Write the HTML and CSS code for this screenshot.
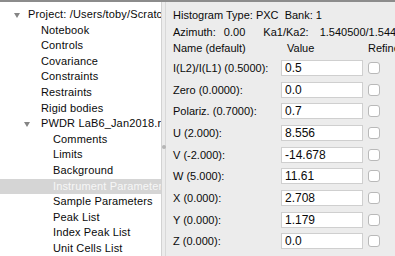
FILE: index.html
```html
<!DOCTYPE html>
<html lang="en">
<head>
  <meta charset="UTF-8">
  <title>GSAS-II Data Tree</title>
  <link rel="stylesheet" href="styles.css">
</head>
<body>
  <div class="topbar"></div>
  <div class="window">
    <div class="tree">
      <div class="node open">Project: /Users/toby/Scratch/LaB6.gpx</div>
      <div class="node lvl1">Notebook</div>
      <div class="node lvl1">Controls</div>
      <div class="node lvl1">Covariance</div>
      <div class="node lvl1">Constraints</div>
      <div class="node lvl1">Restraints</div>
      <div class="node lvl1">Rigid bodies</div>
      <div class="node open sub">PWDR LaB6_Jan2018.raw Bank 1</div>
      <div class="node lvl2">Comments</div>
      <div class="node lvl2">Limits</div>
      <div class="node lvl2">Background</div>
      <div class="node lvl2 selected">Instrument Parameters</div>
      <div class="node lvl2">Sample Parameters</div>
      <div class="node lvl2">Peak List</div>
      <div class="node lvl2">Index Peak List</div>
      <div class="node lvl2">Unit Cells List</div>
    </div>
    <div class="sash"><span class="grip"></span></div>
    <div class="panel">
      <div class="info">Histogram Type: PXC <span class="sep">Bank: 1</span></div>
      <div class="info">Azimuth: <span class="num">0.00</span> <span class="wide">Ka1/Ka2:</span> <span class="wave">1.540500/1.544390</span></div>
      <div class="params">
        <div class="head">Name (default)</div>
        <div class="head">Value</div>
        <div class="head">Refine?</div>

        <label>I(L2)/I(L1) (0.5000):</label>
        <input type="text" value="0.5">
        <span class="check"></span>

        <label>Zero (0.0000):</label>
        <input type="text" value="0.0">
        <span class="check"></span>

        <label>Polariz. (0.7000):</label>
        <input type="text" value="0.7">
        <span class="check"></span>

        <label>U (2.000):</label>
        <input type="text" value="8.556">
        <span class="check"></span>

        <label>V (-2.000):</label>
        <input type="text" value="-14.678">
        <span class="check"></span>

        <label>W (5.000):</label>
        <input type="text" value="11.61">
        <span class="check"></span>

        <label>X (0.000):</label>
        <input type="text" value="2.708">
        <span class="check"></span>

        <label>Y (0.000):</label>
        <input type="text" value="1.179">
        <span class="check"></span>

        <label>Z (0.000):</label>
        <input type="text" value="0.0">
        <span class="check"></span>
      </div>
    </div>
  </div>
</body>
</html>
```

FILE: styles.css
```css
body {
  margin: 0;
  font-family: "Liberation Sans", Arial, sans-serif;
  font-size: 11px;
  color: #0a0a0a;
  background-color: #ececec;
  overflow: hidden;
}
.topbar {
  height: 2px;
  background-color: #8c8c8c;
}
.window {
  display: flex;
  height: 254px;
}
.tree {
  width: 161px;
  flex: none;
  background: #fff;
  padding-top: 5px;
  overflow: hidden;
  white-space: nowrap;
  letter-spacing: 0.15px;
}
.node {
  position: relative;
  height: 15.6px;
  line-height: 15.6px;
  padding-left: 28px;
}
.node.lvl1 {
  padding-left: 41px;
}
.node.lvl2 {
  padding-left: 53px;
}
.node.sub {
  padding-left: 41px;
}
.node.open::before {
  content: "";
  position: absolute;
  left: 14px;
  top: 6px;
  border-left: 3.5px solid transparent;
  border-right: 3.5px solid transparent;
  border-top: 5px solid #858585;
}
.node.sub::before {
  left: 24px;
}
.node.selected {
  background-color: #d5d5d5;
  color: #f7f7f7;
}
.sash {
  width: 3px;
  flex: none;
  border-left: 1px solid #d2d2d2;
  border-right: 1px solid #d8d8d8;
  background-color: #ececec;
}
.grip {
  display: block;
  width: 4px;
  height: 4px;
  margin-top: 143px;
  border-radius: 50%;
  background-color: #b5b5b5;
}
.panel {
  flex: 1;
  padding: 5px 0 0 7px;
  overflow: hidden;
  white-space: nowrap;
}
.info {
  height: 16.5px;
  line-height: 16.5px;
}
.sep {
  margin-left: 3px;
}
.num {
  margin-left: 5px;
}
.wide {
  margin-left: 15px;
}
.wave {
  margin-left: 8px;
}
.params {
  display: grid;
  grid-template-columns: 108px 82px 5px 60px;
  grid-template-rows: 17px;
  grid-auto-rows: 21.7px;
  align-items: center;
}
.params .head {
  line-height: 16.5px;
}
.params .head:nth-child(2) {
  padding-left: 6px;
}
.params .head:nth-child(3) {
  grid-column: 4;
}
.params label {
  grid-column: 1;
}
.params input {
  grid-column: 2;
  box-sizing: border-box;
  width: 82px;
  height: 16px;
  margin: 0;
  padding: 0 3px;
  border: 1px solid #cfcfcf;
  background: #fff;
  font-family: inherit;
  font-size: 12px;
  color: #0a0a0a;
}
.check {
  grid-column: 4;
  box-sizing: border-box;
  width: 12px;
  height: 12px;
  border: 1px solid #b9b9b9;
  border-radius: 3px;
  background: #fff;
}
```
